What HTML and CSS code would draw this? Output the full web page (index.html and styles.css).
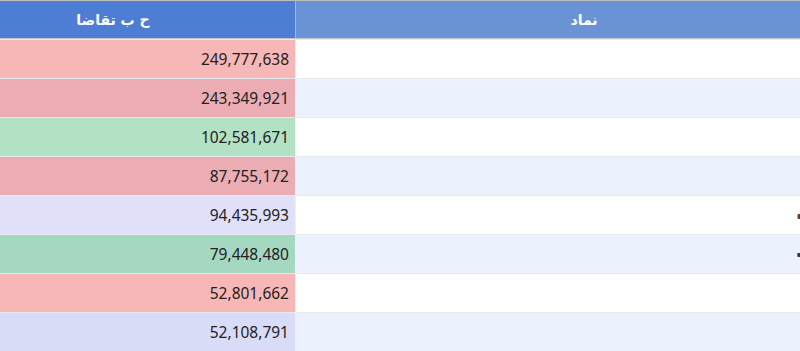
FILE: index.html
```html
<!DOCTYPE html>
<html lang="fa">
<head>
<meta charset="utf-8">
<title>جدول</title>
<link rel="stylesheet" href="styles.css">
</head>
<body>
<div class="frame">
  <table class="grid">
    <thead>
      <tr>
        <th class="sym">نماد</th>
        <th class="val">ح ب تقاضا</th>
      </tr>
    </thead>
    <tbody>
      <tr><td class="sym"></td><td class="val red">249,777,638</td></tr>
      <tr class="alt"><td class="sym"></td><td class="val rose">243,349,921</td></tr>
      <tr><td class="sym"></td><td class="val green">102,581,671</td></tr>
      <tr class="alt"><td class="sym"></td><td class="val rose">87,755,172</td></tr>
      <tr><td class="sym tail"><span class="mark brown"></span></td><td class="val lilac">94,435,993</td></tr>
      <tr class="alt"><td class="sym tail"><span class="mark blue"></span></td><td class="val mint">79,448,480</td></tr>
      <tr><td class="sym"></td><td class="val red">52,801,662</td></tr>
      <tr class="alt"><td class="sym"></td><td class="val lilac2">52,108,791</td></tr>
    </tbody>
  </table>
</div>
</body>
</html>
```

FILE: styles.css
```css
html, body {
  margin: 0;
  padding: 0;
  background: #ffffff;
}

.frame {
  width: 800px;
  height: 350px;
  overflow: hidden;
  border-top: 1px solid #bcbcbc;
}

.grid {
  direction: rtl;
  width: 941px;
  margin-left: -69px;
  border-collapse: separate;
  border-spacing: 0;
  table-layout: fixed;
}

.grid th {
  height: 37px;
  padding: 0;
  color: #ffffff;
  font-family: "DejaVu Sans", "Noto Sans", sans-serif;
  font-weight: bold;
  font-size: 14px;
  text-align: center;
  vertical-align: middle;
  border-bottom: 1px solid #c6c6c6;
}

.grid th.sym {
  width: 576px;
  background: #6a93d6;
}

.grid th.val {
  width: 364px;
  background: #4d7ed3;
  border-right: 1px solid #9fb7e2;
}

.grid td {
  height: 38px;
  padding: 0;
  border-top: 1px solid #e6eaef;
  vertical-align: middle;
}

.grid td.sym {
  background: #ffffff;
}

.grid tr.alt td.sym {
  background: #ebf2fd;
}

.grid td.val {
  border-right: 1px solid #eef1f5;
  padding-right: 7px;
  text-align: right;
  direction: ltr;
  font-family: "Noto Sans", "Open Sans", sans-serif;
  font-size: 15.5px;
  color: #222222;
}

.grid td.tail {
  text-align: left;
  padding-left: 502px;
}

.mark {
  display: inline-block;
  width: 3px;
  height: 5px;
  border-radius: 1px;
  vertical-align: middle;
}

.mark.brown { background: #6a3a1c; box-shadow: -1px 0 0 #e0a040; }
.mark.blue { background: #3a3040; box-shadow: -1px 0 0 #4a7ad0; height: 4px; }

.red { background: #f8b7b7; }
.rose { background: #ebadb3; }
.green { background: #b3e1c3; }
.lilac { background: #e0e0f8; }
.mint { background: #a5d8c1; }
.lilac2 { background: #d9dcf7; }
```
